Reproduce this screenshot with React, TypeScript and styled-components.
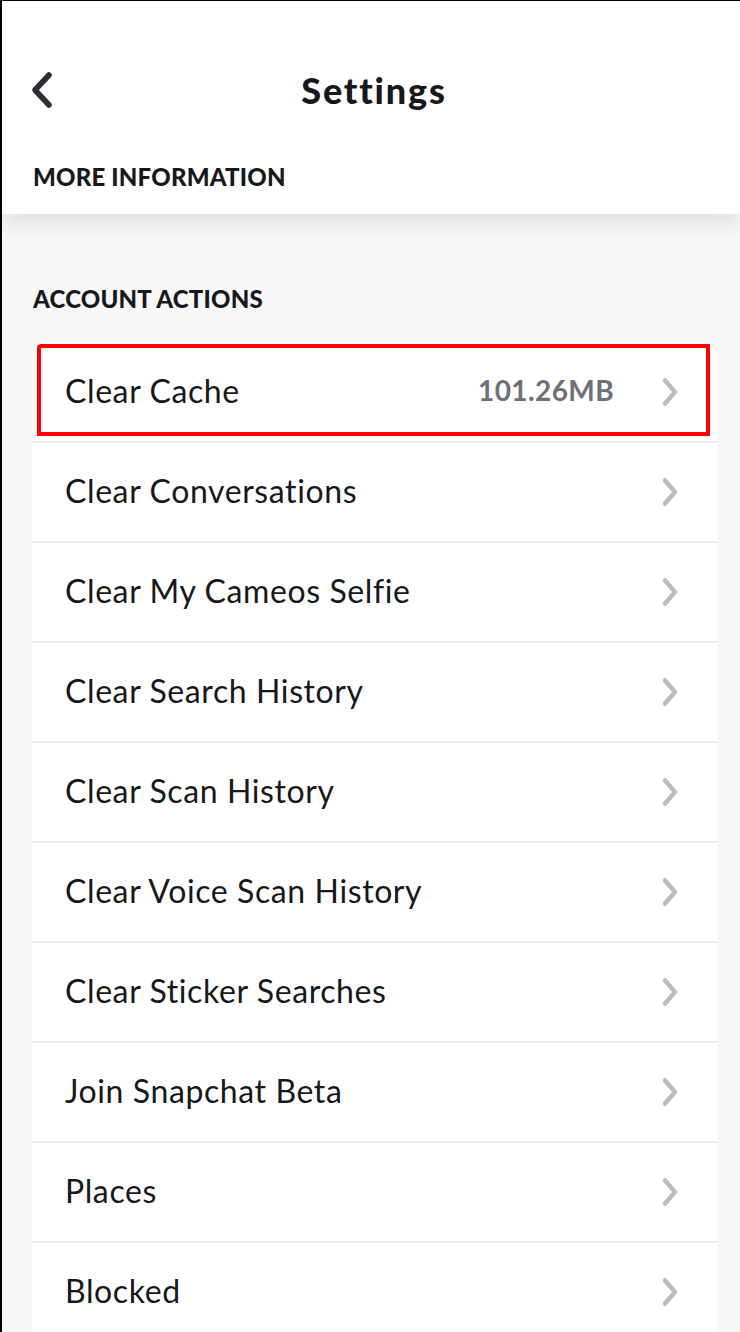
import React from 'react';
import styled, { createGlobalStyle } from 'styled-components';

const FONT = `'Lato', 'Noto Sans', 'Liberation Sans', sans-serif`;

const GlobalStyle = createGlobalStyle`
  html, body {
    margin: 0;
    padding: 0;
    background: #f7f7f8;
  }
  body {
    font-family: ${FONT};
    -webkit-font-smoothing: antialiased;
  }
`;

const Screen = styled.div`
  width: 740px;
  height: 1332px;
  box-sizing: border-box;
  border-top: 1px solid #000;
  border-left: 2px solid #000;
  background: #f7f7f8;
  overflow: hidden;
  display: flex;
  flex-direction: column;
`;

const Header = styled.header`
  background: #fff;
  height: 213px;
  flex-shrink: 0;
  display: flex;
  flex-direction: column;
  position: relative;
  z-index: 1;
  box-shadow: 0 8px 24px rgba(0, 0, 0, 0.11);
`;

const TopBar = styled.div`
  height: 150px;
  padding-top: 28px;
  box-sizing: border-box;
  display: grid;
  grid-template-columns: 80px 1fr 80px;
  align-items: center;
`;

const BackButton = styled.button`
  background: none;
  border: none;
  padding: 0 0 0 25px;
  display: flex;
  align-items: center;
  cursor: pointer;
  height: 40px;
`;

const Title = styled.h1`
  margin: 0;
  text-align: center;
  font-family: ${FONT};
  font-weight: 900;
  font-size: 36px;
  color: #16181b;
  letter-spacing: 1.8px;
  transform: translateX(3px);
`;

const SectionLabel = styled.div`
  font-family: ${FONT};
  font-weight: 900;
  font-size: 24px;
  line-height: 29px;
  color: #16181b;
  letter-spacing: 0.2px;
  padding-left: 31px;
  margin-top: 11px;
`;

const Body = styled.main`
  flex: 1;
  display: flex;
  flex-direction: column;
  padding: 70px 22px 0 30px;
`;

const BodyLabel = styled(SectionLabel)`
  padding-left: 1px;
  margin-top: 0;
  margin-bottom: 30px;
`;

const Card = styled.div`
  background: #fff;
  border-radius: 14px 14px 0 0;
  display: flex;
  flex-direction: column;
  overflow: hidden;
`;

const Row = styled.div<{ $highlight?: boolean }>`
  height: 98px;
  flex-shrink: 0;
  display: flex;
  align-items: center;
  padding: 0 38px 0 33px;
  border-bottom: 2px solid #ececee;
  position: relative;
  cursor: pointer;

  ${({ $highlight }) =>
    $highlight &&
    `
    &::after {
      content: '';
      position: absolute;
      left: 5px;
      top: 1px;
      right: 8px;
      bottom: 5px;
      border: 4px solid #ff0000;
      pointer-events: none;
    }
  `}
`;

const RowLabel = styled.span`
  flex: 1;
  font-family: ${FONT};
  font-size: 32px;
  font-weight: 400;
  color: #16181b;
  letter-spacing: 0.6px;
  padding-bottom: 4px;
`;

const RowValue = styled.span`
  font-family: ${FONT};
  font-size: 28px;
  font-weight: 700;
  color: #6d7075;
  margin-right: 46px;
  letter-spacing: 0.4px;
  padding-bottom: 4px;
`;

const Chevron = ({ color, width, height }: { color: string; width: number; height: number }) => (
  <svg width={width} height={height} viewBox="0 0 20 30" fill="none">
    <path d="M5 3.5 L15 15 L5 26.5" stroke={color} strokeWidth={4.6} strokeLinecap="round" strokeLinejoin="round" />
  </svg>
);

const BackChevron = () => (
  <svg width={28} height={40} viewBox="0 0 28 40" fill="none">
    <path d="M22 5 L8 20 L22 35" stroke="#2b2e33" strokeWidth={5.6} strokeLinecap="round" strokeLinejoin="round" />
  </svg>
);

const actions: { label: string; value?: string; highlight?: boolean }[] = [
  { label: 'Clear Cache', value: '101.26MB', highlight: true },
  { label: 'Clear Conversations' },
  { label: 'Clear My Cameos Selfie' },
  { label: 'Clear Search History' },
  { label: 'Clear Scan History' },
  { label: 'Clear Voice Scan History' },
  { label: 'Clear Sticker Searches' },
  { label: 'Join Snapchat Beta' },
  { label: 'Places' },
  { label: 'Blocked' },
];

export default function App() {
  return (
    <>
      <GlobalStyle />
      <Screen>
        <Header>
          <TopBar>
            <BackButton aria-label="Back">
              <BackChevron />
            </BackButton>
            <Title>Settings</Title>
            <span />
          </TopBar>
          <SectionLabel>MORE INFORMATION</SectionLabel>
        </Header>

        <Body>
          <BodyLabel>ACCOUNT ACTIONS</BodyLabel>
          <Card>
            {actions.map(a => (
              <Row key={a.label} $highlight={a.highlight}>
                <RowLabel>{a.label}</RowLabel>
                {a.value && <RowValue>{a.value}</RowValue>}
                <Chevron color="#b9bcc1" width={20} height={30} />
              </Row>
            ))}
          </Card>
        </Body>
      </Screen>
    </>
  );
}
